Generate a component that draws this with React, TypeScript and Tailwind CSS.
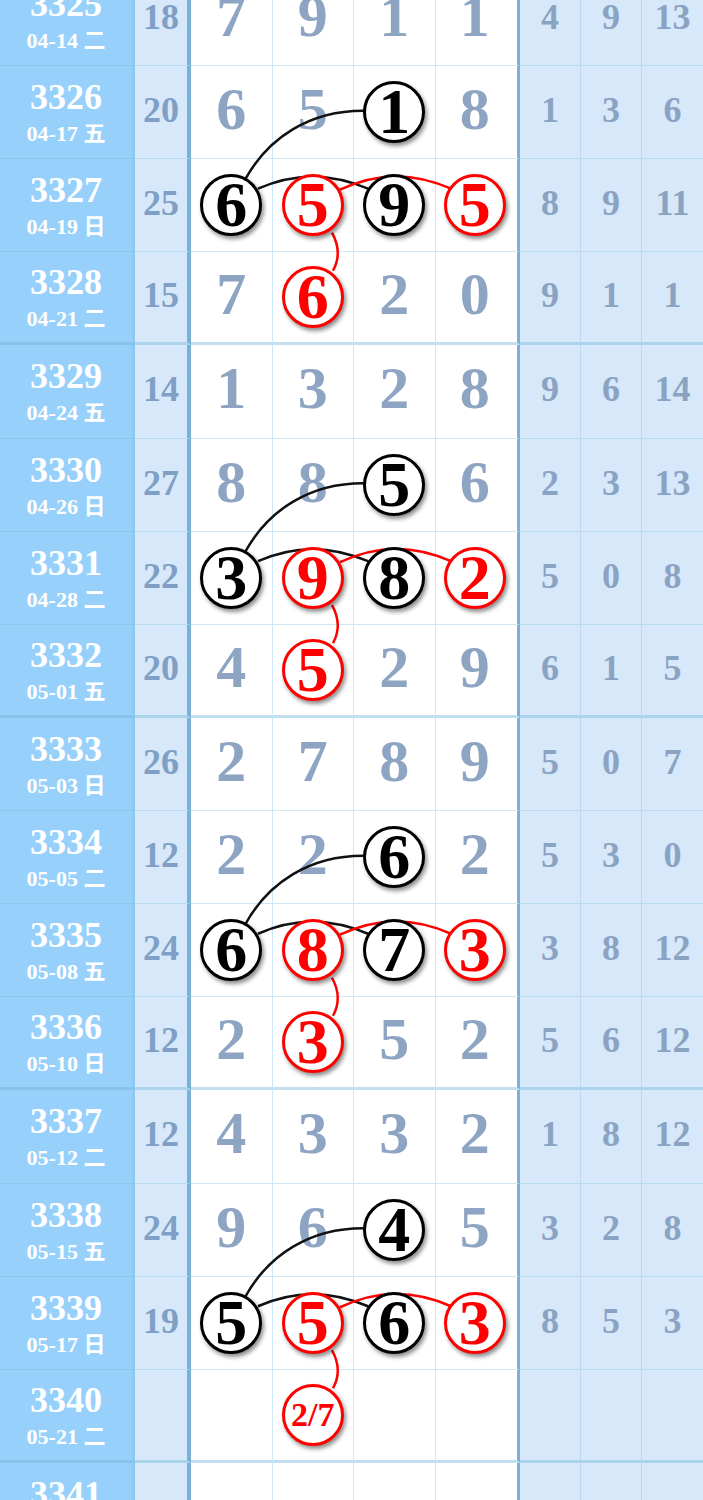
import React from "react";

type Row = [string, string, string, string[], string[]];

const ROWS: Row[] = [
  ["3325", "04-14 二", "18", ["7", "9", "1", "1"], ["4", "9", "13"]],
  ["3326", "04-17 五", "20", ["6", "5", "b1", "8"], ["1", "3", "6"]],
  ["3327", "04-19 日", "25", ["b6", "r5", "b9", "r5"], ["8", "9", "11"]],
  ["3328", "04-21 二", "15", ["7", "r6", "2", "0"], ["9", "1", "1"]],
  ["3329", "04-24 五", "14", ["1", "3", "2", "8"], ["9", "6", "14"]],
  ["3330", "04-26 日", "27", ["8", "8", "b5", "6"], ["2", "3", "13"]],
  ["3331", "04-28 二", "22", ["b3", "r9", "b8", "r2"], ["5", "0", "8"]],
  ["3332", "05-01 五", "20", ["4", "r5", "2", "9"], ["6", "1", "5"]],
  ["3333", "05-03 日", "26", ["2", "7", "8", "9"], ["5", "0", "7"]],
  ["3334", "05-05 二", "12", ["2", "2", "b6", "2"], ["5", "3", "0"]],
  ["3335", "05-08 五", "24", ["b6", "r8", "b7", "r3"], ["3", "8", "12"]],
  ["3336", "05-10 日", "12", ["2", "r3", "5", "2"], ["5", "6", "12"]],
  ["3337", "05-12 二", "12", ["4", "3", "3", "2"], ["1", "8", "12"]],
  ["3338", "05-15 五", "24", ["9", "6", "b4", "5"], ["3", "2", "8"]],
  ["3339", "05-17 日", "19", ["b5", "r5", "b6", "r3"], ["8", "5", "3"]],
  ["3340", "05-21 二", "", ["", "r2/7", "", ""], ["", "", ""]],
  ["3341", "05-24 五", "", ["", "", "", ""], ["", "", ""]],
];

const RH = 93.13;

// circled number in the main area
const Ball = ({ v, red }: { v: string; red: boolean }) => (
  <div
    className={`relative z-10 flex h-[62px] w-[62px] items-center justify-center rounded-full border-[3px] bg-white font-bold leading-none shadow-[2px_3px_4px_rgba(0,0,0,0.45)] ${
      red ? "border-[#f00] text-[#f00]" : "border-black text-black"
    } ${v.length > 1 ? "text-[34px]" : "text-[64px]"}`}
  >
    {v}
  </div>
);

const Links = () => {
  const groups = [1, 5, 9, 13];
  return (
    <svg className="pointer-events-none absolute left-0 top-0 z-[5]" width="703" height={RH * 17}>
      {groups.map((r) => {
        const Y = r * RH + RH / 2;
        return (
          <g key={r} fill="none" strokeWidth="2.5">
            <path d={`M245 ${Y + 67} C268 ${Y + 25} 310 ${Y - 3} 366 ${Y - 2}`} stroke="#111" />
            <path d={`M258 ${Y + 76} Q312 ${Y + 52} 368 ${Y + 76}`} stroke="#111" />
            <path d={`M340 ${Y + 77} Q395 ${Y + 51} 451 ${Y + 76}`} stroke="#f00" />
            <path d={`M332 ${Y + 120} Q343 ${Y + 140} 333 ${Y + 158}`} stroke="#f00" />
          </g>
        );
      })}
    </svg>
  );
};

export default function App() {
  return (
    <div className="h-[1500px] w-[703px] overflow-hidden bg-white font-['Liberation_Serif','Noto_Sans_CJK_SC',serif]">
      <div className="relative mt-[-27.13px]">
        {ROWS.map(([no, date, sum, main, tail], i) => {
          const thick = i % 4 === 3;
          return (
            <div key={no} className="flex h-[93.13px]">
              {/* period + date */}
              <div
                className={`flex w-[135px] flex-col items-center justify-center gap-[8px] border-r-[3px] border-r-[#8cc8ef] bg-[#97d1fb] text-white font-bold ${
                  thick ? "border-b-[3px] border-b-[#86c2ea]" : "border-b border-b-[#8cc6ee]"
                }`}
              >
                <div className="text-[36px] leading-none">{no}</div>
                <div className="text-[22px] leading-none">{date}</div>
              </div>

              {/* sum */}
              <div
                className={`flex w-[56px] items-center justify-center border-r-4 border-r-[#79b1d7] bg-[#d6e8f9] pb-1 text-[36px] font-bold leading-none text-[#7f9fc4] ${
                  thick ? "border-b-[3px] border-b-[#acd3ec]" : "border-b border-b-[#b9dcf2]"
                }`}
              >
                {sum}
              </div>

              {/* main four digits */}
              {main.map((c, j) => {
                const last = j === 3;
                const circled = c.startsWith("b") || c.startsWith("r");
                return (
                  <div
                    key={j}
                    className={`flex items-center justify-center bg-white ${
                      last ? "w-[84.5px] border-r-[3px] border-r-[#79b1d7] pr-[3px]" : "w-[81.5px] border-r border-r-[#cce7f5]"
                    } ${thick ? "border-b-[3px] border-b-[#c0e0f1]" : "border-b border-b-[#cde7f4]"}`}
                  >
                    {circled ? (
                      <Ball v={c.slice(1)} red={c.startsWith("r")} />
                    ) : (
                      <span className="pb-[6px] text-[60px] font-bold leading-none text-[#8da4c2]">{c}</span>
                    )}
                  </div>
                );
              })}

              {/* right three */}
              {tail.map((t, j) => (
                <div
                  key={j}
                  className={`flex w-[61px] items-center justify-center bg-[#d6e8f9] pb-1 text-[36px] font-bold leading-none text-[#8ba3c3] ${
                    j < 2 ? "border-r border-r-[#b7daf0]" : ""
                  } ${thick ? "border-b-[3px] border-b-[#acd3ec]" : "border-b border-b-[#b9dcf2]"}`}
                >
                  {t}
                </div>
              ))}
            </div>
          );
        })}
        <Links />
      </div>
    </div>
  );
}
